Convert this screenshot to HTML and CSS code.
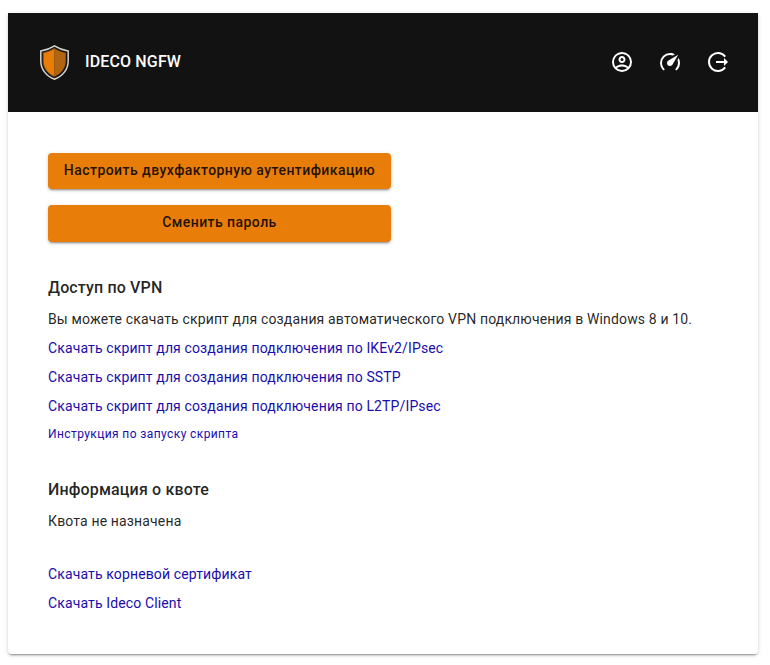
FILE: index.html
```html
<!DOCTYPE html>
<html lang="ru">
<head>
<meta charset="utf-8">
<title>IDECO NGFW</title>
<link rel="stylesheet" href="styles.css">
</head>
<body>
<main class="card">
  <header class="topbar">
    <svg class="logo" viewBox="0 0 29 35"><path d="M14.500 .9C10.500 3.500 5.500 5.200 .8 6V16c0 8 5 15 13.700 18.200C23.200 31 28.200 24 28.200 16V6C23.500 5.200 18.500 3.500 14.500 .9z" fill="#1b1a18" stroke="#d9d4ce" stroke-width="1.500"/><path d="M14.500 3.500C11 5.700 7 7.200 3.300 7.800V16c0 6.500 4 12.500 11.200 15.500z" fill="#e87d09" stroke="#8f5312" stroke-width=".8"/><path d="M14.500 3.500c3.500 2.200 7.500 3.700 11.200 4.300V16c0 6.500-4 12.500-11.200 15.500z" fill="#b26510"/></svg>
    <h1 class="brand">IDECO NGFW</h1>
    <nav class="actions">
      <a class="action"><svg viewBox="0 0 24 24"><path d="M12 2A10 10 0 0 0 2 12a10 10 0 0 0 10 10 10 10 0 0 0 10-10A10 10 0 0 0 12 2M7.070 18.280c.43-.9 3.050-1.780 4.930-1.780s4.500.88 4.930 1.780A7.890 7.890 0 0 1 12 20c-1.860 0-3.570-.64-4.930-1.720m11.290-1.450c-1.430-1.740-4.900-2.330-6.360-2.330s-4.930.59-6.360 2.330A7.930 7.930 0 0 1 4 12c0-4.410 3.590-8 8-8s8 3.590 8 8c0 1.820-.62 3.500-1.640 4.830M12 6c-1.940 0-3.500 1.560-3.500 3.500S10.060 13 12 13s3.500-1.560 3.500-3.500S13.940 6 12 6m0 5a1.500 1.500 0 1 1 0-3 1.500 1.500 0 0 1 0 3z"/></svg></a>
      <a class="action"><svg viewBox="0 0 24 24"><path d="M12 16a3 3 0 0 1-3-3c0-1.120.61-2.100 1.500-2.610l9.710-5.620-5.530 9.580c-.5.980-1.510 1.650-2.680 1.650m0-13c1.810 0 3.500.5 4.970 1.320l-2.100 1.210C14 5.190 13 5 12 5a8 8 0 0 0-8 8c0 2.210.89 4.210 2.340 5.650h.01c.39.390.39 1.020 0 1.410-.39.390-1.030.390-1.420.010A9.969 9.969 0 0 1 2 13 10 10 0 0 1 12 3m10 10c0 2.760-1.120 5.260-2.930 7.070-.39.380-1.020.380-1.410-.010a.996.996 0 0 1 0-1.410A7.950 7.950 0 0 0 20 13c0-1-.19-2-.54-2.900L20.670 8C21.500 9.500 22 11.180 22 13z"/></svg></a>
      <a class="action"><svg viewBox="0 0 24 24"><path class="line" d="M19.200 6.600A9 9 0 1 0 19.200 17.400M10 12h9"/><path d="M18 8v8l4-4z"/></svg></a>
    </nav>
  </header>
  <div class="content">
    <div class="buttons"><button class="button">Настроить двухфакторную аутентификацию</button><button class="button button-tall">Сменить пароль</button></div>
    <section class="section">
      <h2 class="title">Доступ по VPN</h2>
      <p class="row">Вы можете скачать скрипт для создания автоматического VPN подключения в Windows 8 и 10.</p>
      <a class="row link">Скачать скрипт для создания подключения по IKEv2/IPsec</a>
      <a class="row link">Скачать скрипт для создания подключения по SSTP</a>
      <a class="row link">Скачать скрипт для создания подключения по L2TP/IPsec</a>
      <a class="link hint">Инструкция по запуску скрипта</a>
    </section>
    <section class="section quota">
      <h2 class="title">Информация о квоте</h2>
      <p class="row">Квота не назначена</p>
    </section>
    <section class="downloads">
      <a class="row link">Скачать корневой сертификат</a>
      <a class="row link">Скачать Ideco Client</a>
    </section>
  </div>
</main>
</body>
</html>
```
FILE: styles.css
```css
* { box-sizing: border-box; }
body { margin: 0; padding: 13px 12px 11px 8px; background: #fff; font-family: Roboto, sans-serif; color: rgba(0,0,0,.87); }
.card { height: 641px; border-radius: 0 0 4px 4px; overflow: hidden; background: #fff; box-shadow: 0 3px 1px -2px rgba(0,0,0,.2), 0 2px 2px rgba(0,0,0,.14), 0 1px 5px rgba(0,0,0,.12); }
.topbar { height: 99px; display: flex; align-items: center; padding: 0 28px 0 32px; background: #121212; color: #fff; }
.logo { width: 29px; height: 35px; }
.brand { margin: 0 0 2px 16px; font-size: 16px; line-height: 24px; font-weight: 500; letter-spacing: .15px; }
.actions { margin: 0 0 1px auto; display: flex; gap: 24px; }
.action, .action svg { display: block; width: 24px; height: 24px; fill: #fff; }
.action .line { fill: none; stroke: #fff; stroke-width: 2; }
.content { padding: 41px 40px 0; }
.buttons { width: 343px; display: flex; flex-direction: column; gap: 16px; }
.button { height: 36px; padding: 0 0 2px; border: 0; border-radius: 4px; background: #e87d09; color: rgba(0,0,0,.87); font: 500 14px/24px Roboto, sans-serif; letter-spacing: .45px; white-space: nowrap; box-shadow: 0 3px 1px -2px rgba(0,0,0,.2), 0 2px 2px rgba(0,0,0,.14), 0 1px 5px rgba(0,0,0,.12); }
.button-tall { height: 37px; padding-bottom: 3px; }
.section { padding-top: 33px; }
.title { margin: 0 0 4px; font-size: 16px; line-height: 26px; font-weight: 500; letter-spacing: .15px; }
.row { display: block; margin: 0; font-size: 14px; line-height: 29px; letter-spacing: .15px; white-space: nowrap; }
.link { color: #1a0dab; letter-spacing: .13px; }
.hint { display: block; font-size: 12px; line-height: 26px; letter-spacing: .4px; }
.quota { padding-top: 30px; }
.downloads { padding-top: 24px; }
```
